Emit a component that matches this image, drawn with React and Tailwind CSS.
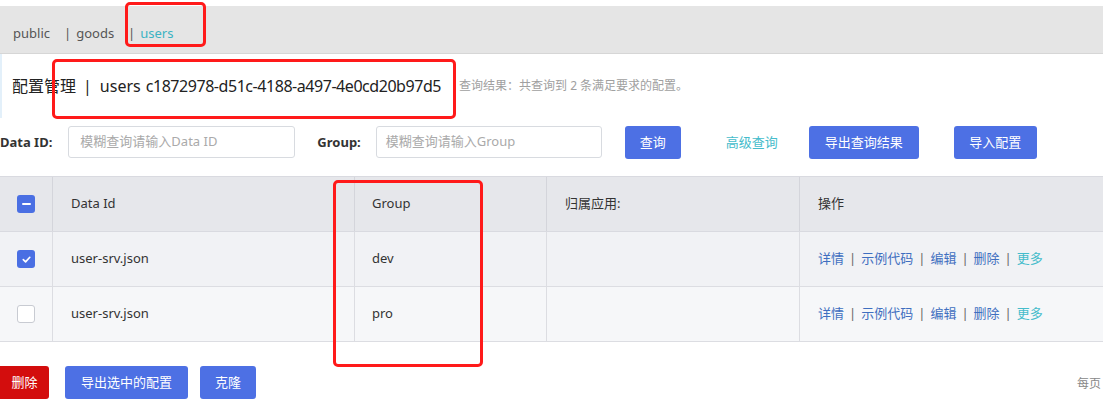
import React from 'react';

const font = { fontFamily: '"Noto Sans", "Noto Sans CJK SC", sans-serif' };

function Checkbox({ state }) {
  if (state === 'none') {
    return <span className="block w-[18px] h-[18px] rounded-[3px] border border-[#c8cbd2] bg-white" />;
  }
  return (
    <span className="flex items-center justify-center w-[18px] h-[18px] rounded-[3px] bg-[#4a6fe3]">
      {state === 'some' ? (
        <span className="block w-[9px] h-[2px] bg-white rounded" />
      ) : (
        <svg width="11" height="11" viewBox="0 0 12 12" fill="none">
          <path d="M2.5 6.2 5 8.6 9.6 3.6" stroke="white" strokeWidth="1.8" strokeLinecap="round" strokeLinejoin="round" />
        </svg>
      )}
    </span>
  );
}

function Actions() {
  const sep = <span className="text-[#666] mx-[5px]">|</span>;
  return (
    <span className="text-[13px] text-[#3f6fc0]">
      详情{sep}示例代码{sep}编辑{sep}删除{sep}<span className="text-[#45bccb]">更多</span>
    </span>
  );
}

const rows = [
  { id: 'user-srv.json', group: 'dev', checked: true, bg: 'bg-[#f1f2f5]' },
  { id: 'user-srv.json', group: 'pro', checked: false, bg: 'bg-[#f6f7f9]' },
];

export default function App() {
  return (
    <div className="relative w-[1103px] h-[400px] overflow-hidden bg-white text-[#333]" style={font}>
      {/* namespace tabs */}
      <div className="mt-[6px] h-[48px] bg-[#e5e5e5] border-b border-[#d6d6d6] flex items-center pl-[13px] pt-[8px] text-[13px] text-[#555]">
        <span>public</span>
        <span className="ml-[14px]">|</span>
        <span className="ml-[5px]">goods</span>
        <span className="ml-[14px]">|</span>
        <span className="ml-[5px] text-[#3bb3c3]">users</span>
      </div>

      {/* title */}
      <div className="h-[64px] flex items-center pl-[10px] border-l-2 border-[#e3f0fa]">
        <span className="text-[16px] text-[#222]">配置管理</span>
        <span className="ml-[7px] text-[16px] text-[#222]">|</span>
        <span className="ml-[8px] text-[16px] text-[#222]">users</span>
        <span className="ml-[5px] text-[16px] text-[#222] tracking-[-0.45px]">c1872978-d51c-4188-a497-4e0cd20b97d5</span>
        <span className="ml-[18px] text-[12px] text-[#a0a0a0]">查询结果：共查询到 2 条满足要求的配置。</span>
      </div>

      {/* filters */}
      <div className="h-[58px] flex items-start pt-[8px] text-[13px]">
        <span className="font-bold text-[#333] mt-[7px]">Data ID:</span>
        <div className="ml-[16px] w-[227px] h-[32px] border border-[#d8dbe0] rounded-[3px] flex items-center pl-[11px] text-[#aaa]">模糊查询请输入Data ID</div>
        <span className="ml-[22px] font-bold text-[#333] mt-[7px]">Group:</span>
        <div className="ml-[15px] w-[226px] h-[32px] border border-[#d8dbe0] rounded-[3px] flex items-center pl-[9px] text-[#aaa]">模糊查询请输入Group</div>
        <button className="ml-[23px] w-[56px] h-[33px] bg-[#4d70e4] text-white rounded-[3px]">查询</button>
        <span className="ml-[45px] mt-[7px] text-[#45bccb]">高级查询</span>
        <button className="ml-[31px] w-[110px] h-[33px] bg-[#4d70e4] text-white rounded-[3px]">导出查询结果</button>
        <button className="ml-[35px] w-[83px] h-[33px] bg-[#4d70e4] text-white rounded-[3px]">导入配置</button>
      </div>

      {/* table */}
      <div className="text-[13px] text-[#333]">
        <div className="flex h-[56px] bg-[#e6e7eb] border-y border-[#d9dae0]">
          <div className="w-[53px] flex items-center justify-center border-r border-[#d4d5db]"><Checkbox state="some" /></div>
          <div className="w-[302px] flex items-center pl-[18px] border-r border-[#d4d5db]">Data Id</div>
          <div className="w-[192px] flex items-center pl-[17px] border-r border-[#d4d5db]">Group</div>
          <div className="w-[253px] flex items-center pl-[18px] border-r border-[#d4d5db]">归属应用:</div>
          <div className="flex-1 flex items-center pl-[18px]">操作</div>
        </div>
        {rows.map((r, i) => (
          <div key={i} className={`flex h-[55px] ${r.bg} border-b border-[#dcdde2]`}>
            <div className="w-[53px] flex items-center justify-center border-r border-[#dcdde2]"><Checkbox state={r.checked ? 'all' : 'none'} /></div>
            <div className="w-[302px] flex items-center pl-[18px] border-r border-[#dcdde2]">{r.id}</div>
            <div className="w-[192px] flex items-center pl-[17px] border-r border-[#dcdde2]">{r.group}</div>
            <div className="w-[253px] flex items-center pl-[18px] border-r border-[#dcdde2]"></div>
            <div className="flex-1 flex items-center pl-[18px]"><Actions /></div>
          </div>
        ))}
      </div>

      {/* bottom actions */}
      <div className="flex items-start mt-[24px] text-[13px] text-white">
        <button className="w-[49px] h-[33px] bg-[#d30d0d] rounded-r-[3px]">删除</button>
        <button className="ml-[16px] w-[123px] h-[33px] bg-[#4d70e4] rounded-[3px]">导出选中的配置</button>
        <button className="ml-[12px] w-[56px] h-[33px] bg-[#4d70e4] rounded-[3px]">克隆</button>
        <span className="ml-auto mr-[2px] mt-[9px] text-[12px] text-[#888]">每页</span>
      </div>

      {/* red annotation boxes */}
      <div className="absolute left-[125px] top-[2px] w-[81px] h-[45px] border-[3px] border-[#ff1a1a] rounded-[5px]" />
      <div className="absolute left-[52px] top-[59px] w-[404px] h-[60px] border-[3px] border-[#ff1a1a] rounded-[5px]" />
      <div className="absolute left-[333px] top-[180px] w-[150px] h-[187px] border-[3px] border-[#ff1a1a] rounded-[5px]" />
    </div>
  );
}
